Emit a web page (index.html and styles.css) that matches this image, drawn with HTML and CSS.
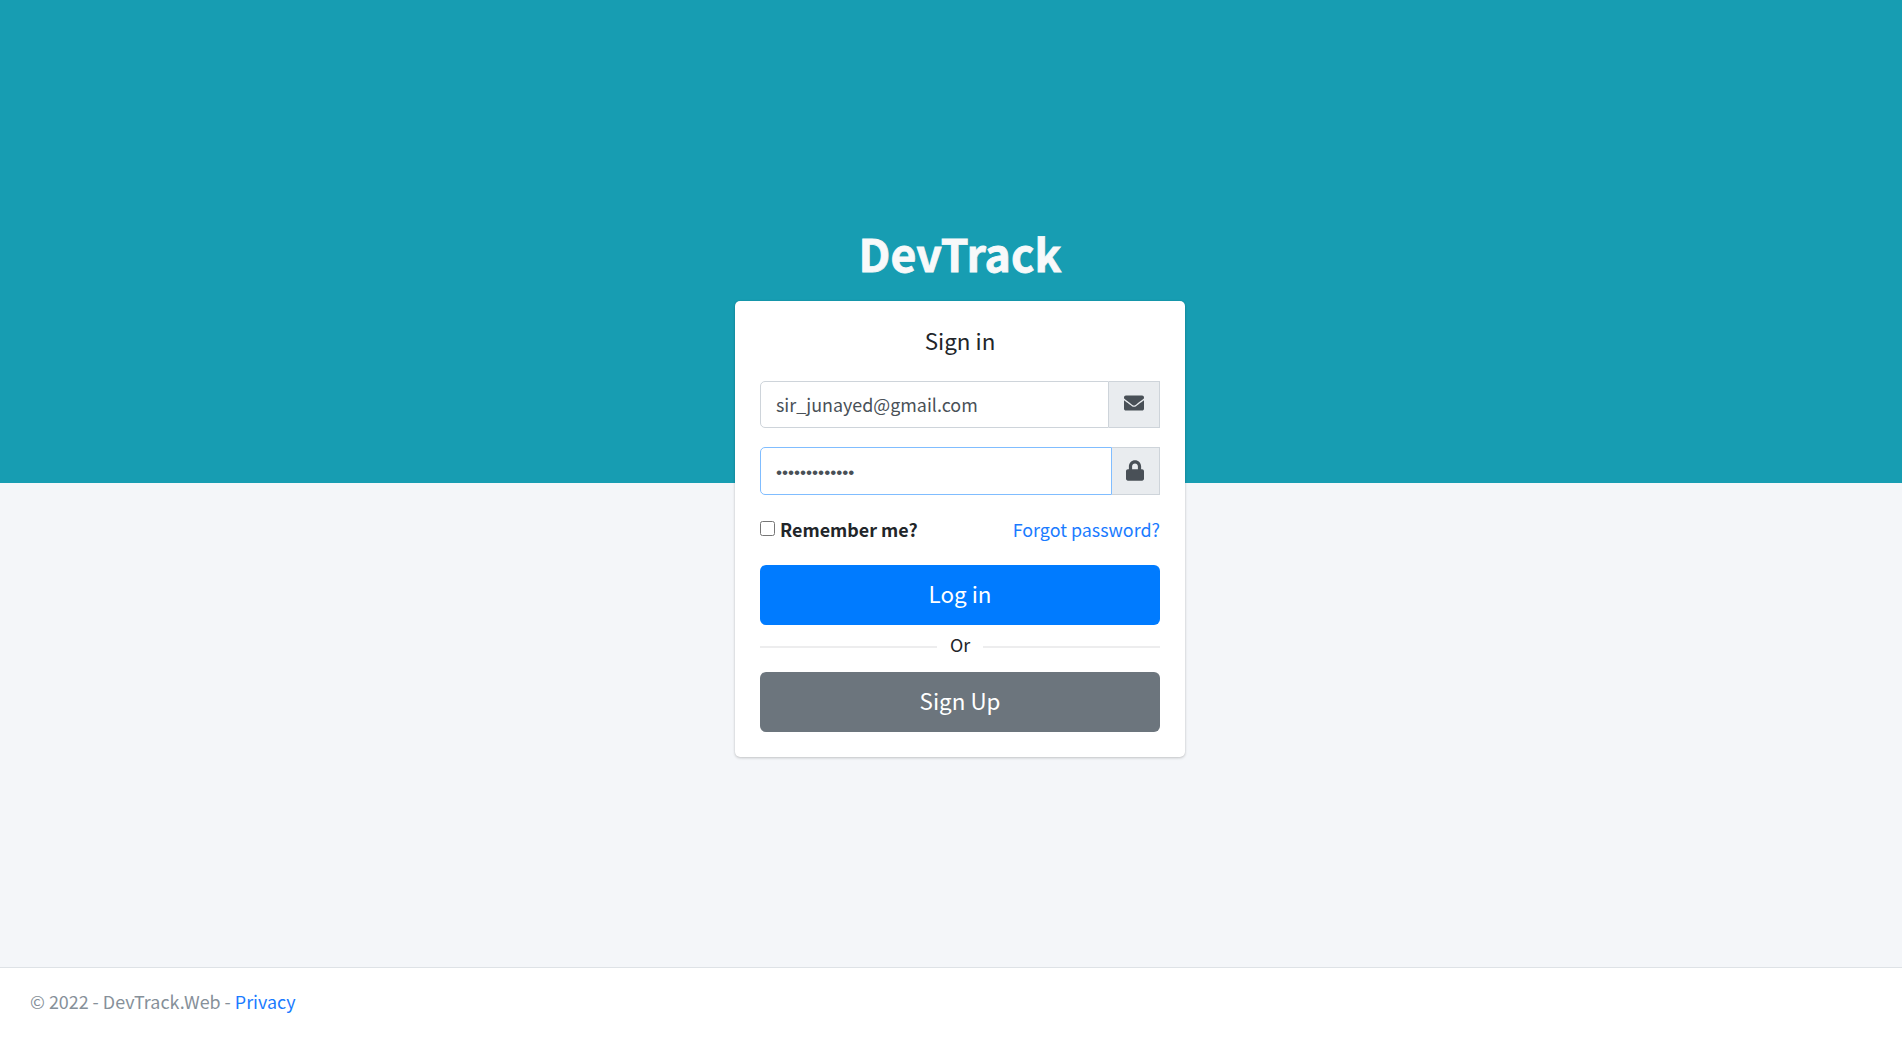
FILE: index.html
```html
<!DOCTYPE html>
<html lang="en">
<head>
<meta charset="utf-8">
<title>Sign in - DevTrack.Web</title>
<link rel="stylesheet" href="styles.css">
</head>
<body>
<main class="page">
  <div class="login-box">
    <h1 class="brand">DevTrack</h1>
    <form class="card">
      <p class="card-title">Sign in</p>
      <div class="field field-email">
        <div class="control"><span class="email">sir_junayed@gmail.com</span></div>
        <div class="addon">
          <svg width="20" height="20" viewBox="0 0 512 512" fill="currentColor"><path d="M502.3 190.8c3.9-3.1 9.7-.2 9.7 4.7V400c0 26.500-21.500 48-48 48H48c-26.500 0-48-21.500-48-48V195.600c0-5 5.700-7.800 9.700-4.700 22.400 17.400 52.100 39.500 154.100 113.600 21.100 15.400 56.700 47.800 92.200 47.600 35.700.3 72-32.800 92.300-47.600 102-74.100 131.600-96.300 154-113.700zM256 320c23.200.4 56.600-29.200 73.400-41.400 132.700-96.300 142.800-104.700 173.400-128.700 5.800-4.500 9.200-11.500 9.200-18.900v-19c0-26.500-21.500-48-48-48H48c-26.500 0-48 21.500-48 48v19c0 7.400 3.400 14.300 9.200 18.900 30.600 23.900 40.700 32.400 173.400 128.700 16.800 12.200 50.200 41.800 73.400 41.400z"/></svg>
        </div>
      </div>
      <div class="field field-password">
        <div class="control focused"><span class="dots">•••••••••••••</span></div>
        <div class="addon">
          <svg width="18" height="21" viewBox="0 0 448 512" fill="currentColor"><path d="M400 224h-24v-72C376 68.200 307.800 0 224 0S72 68.200 72 152v72H48c-26.500 0-48 21.500-48 48v192c0 26.500 21.500 48 48 48h352c26.500 0 48-21.500 48-48V272c0-26.500-21.500-48-48-48zm-104 0H152v-72c0-39.700 32.300-72 72-72s72 32.300 72 72v72z"/></svg>
        </div>
      </div>
      <div class="options">
        <label class="remember"><input class="check" type="checkbox"><span>Remember me?</span></label>
        <a class="link" href="#">Forgot password?</a>
      </div>
      <button class="btn btn-primary" type="button">Log in</button>
      <div class="divider"><span class="or">Or</span></div>
      <button class="btn btn-secondary" type="button">Sign Up</button>
    </form>
  </div>
</main>
<footer class="footer"><span>© 2022 - DevTrack.Web - <a class="link" href="#">Privacy</a></span></footer>
</body>
</html>
```
FILE: styles.css
```css
* { box-sizing: border-box; }

body {
  margin: 0;
  height: 1040px;
  display: flex;
  flex-direction: column;
  overflow: hidden;
  background: #f4f6f9;
  color: #212529;
  font-family: "Noto Sans CJK SC", "Noto Sans", sans-serif;
  font-size: 17.9px;
  line-height: 30px;
}

.page {
  height: 967px;
  flex: none;
  display: flex;
  justify-content: center;
  padding: 225px 0 0 18px;
  background: linear-gradient(#179db2 483px, #f4f6f9 483px);
}

.login-box { width: 450px; }

.brand {
  margin: 0;
  height: 76px;
  line-height: 55px;
  font-size: 44.6px;
  font-weight: 700;
  text-align: center;
  color: #f8f9fa;
  -webkit-text-stroke: .8px #f8f9fa;
}

.card {
  height: 456px;
  padding: 25px;
  border-radius: 5px;
  background: #fff;
  box-shadow: 0 0 1px rgba(0, 0, 0, .125), 0 1px 3px rgba(0, 0, 0, .2);
}

.card-title {
  margin: 0;
  height: 55px;
  line-height: 28px;
  font-size: 22.4px;
  text-align: center;
}

.field { display: flex; }
.field-email { height: 47px; margin-bottom: 19px; }
.field-password { height: 48px; margin-bottom: 21px; }

.control {
  flex: 1;
  display: flex;
  align-items: center;
  padding: 0 0 2px 15px;
  border: 1px solid #ced4da;
  border-radius: 5px 0 0 5px;
  color: #495057;
}
.control.focused {
  padding: 2px 0 0 15px;
  border-color: #80bdff;
}

.dots {
  font-family: "Liberation Sans", sans-serif;
  font-size: 17.2px;
}

.addon {
  display: flex;
  align-items: center;
  justify-content: center;
  border: 1px solid #ced4da;
  border-left: 0;
  background: #e9ecef;
  color: #495057;
}
.field-email .addon { width: 51px; padding-bottom: 3px; }
.field-password .addon { width: 48px; padding: 0 1px 1px 0; }

.options {
  height: 49px;
  line-height: 27px;
  display: flex;
  justify-content: space-between;
}
.remember { display: flex; font-weight: 700; }
.check { width: 15px; height: 15px; margin: 5px 5px 0 0; }

.link { color: #1a7bff; text-decoration: none; }

.btn {
  display: block;
  width: 100%;
  height: 60px;
  padding: 0 0 4px;
  border: 0;
  border-radius: 6px;
  color: #fff;
  font: 22.4px/56px "Noto Sans CJK SC", "Noto Sans", sans-serif;
}
.btn-primary { background: #007bff; }
.btn-secondary { background: #6c757d; }

.divider {
  height: 47px;
  display: flex;
  align-items: flex-start;
}
.divider::before, .divider::after {
  content: "";
  flex: 1;
  height: 2px;
  margin-top: 21px;
  background: #ededee;
}
.or { width: 46px; margin-top: 4px; text-align: center; }

.footer {
  flex: 1;
  padding: 18px 30px;
  border-top: 1px solid #dee2e6;
  background: #fff;
  color: #869099;
}
```
